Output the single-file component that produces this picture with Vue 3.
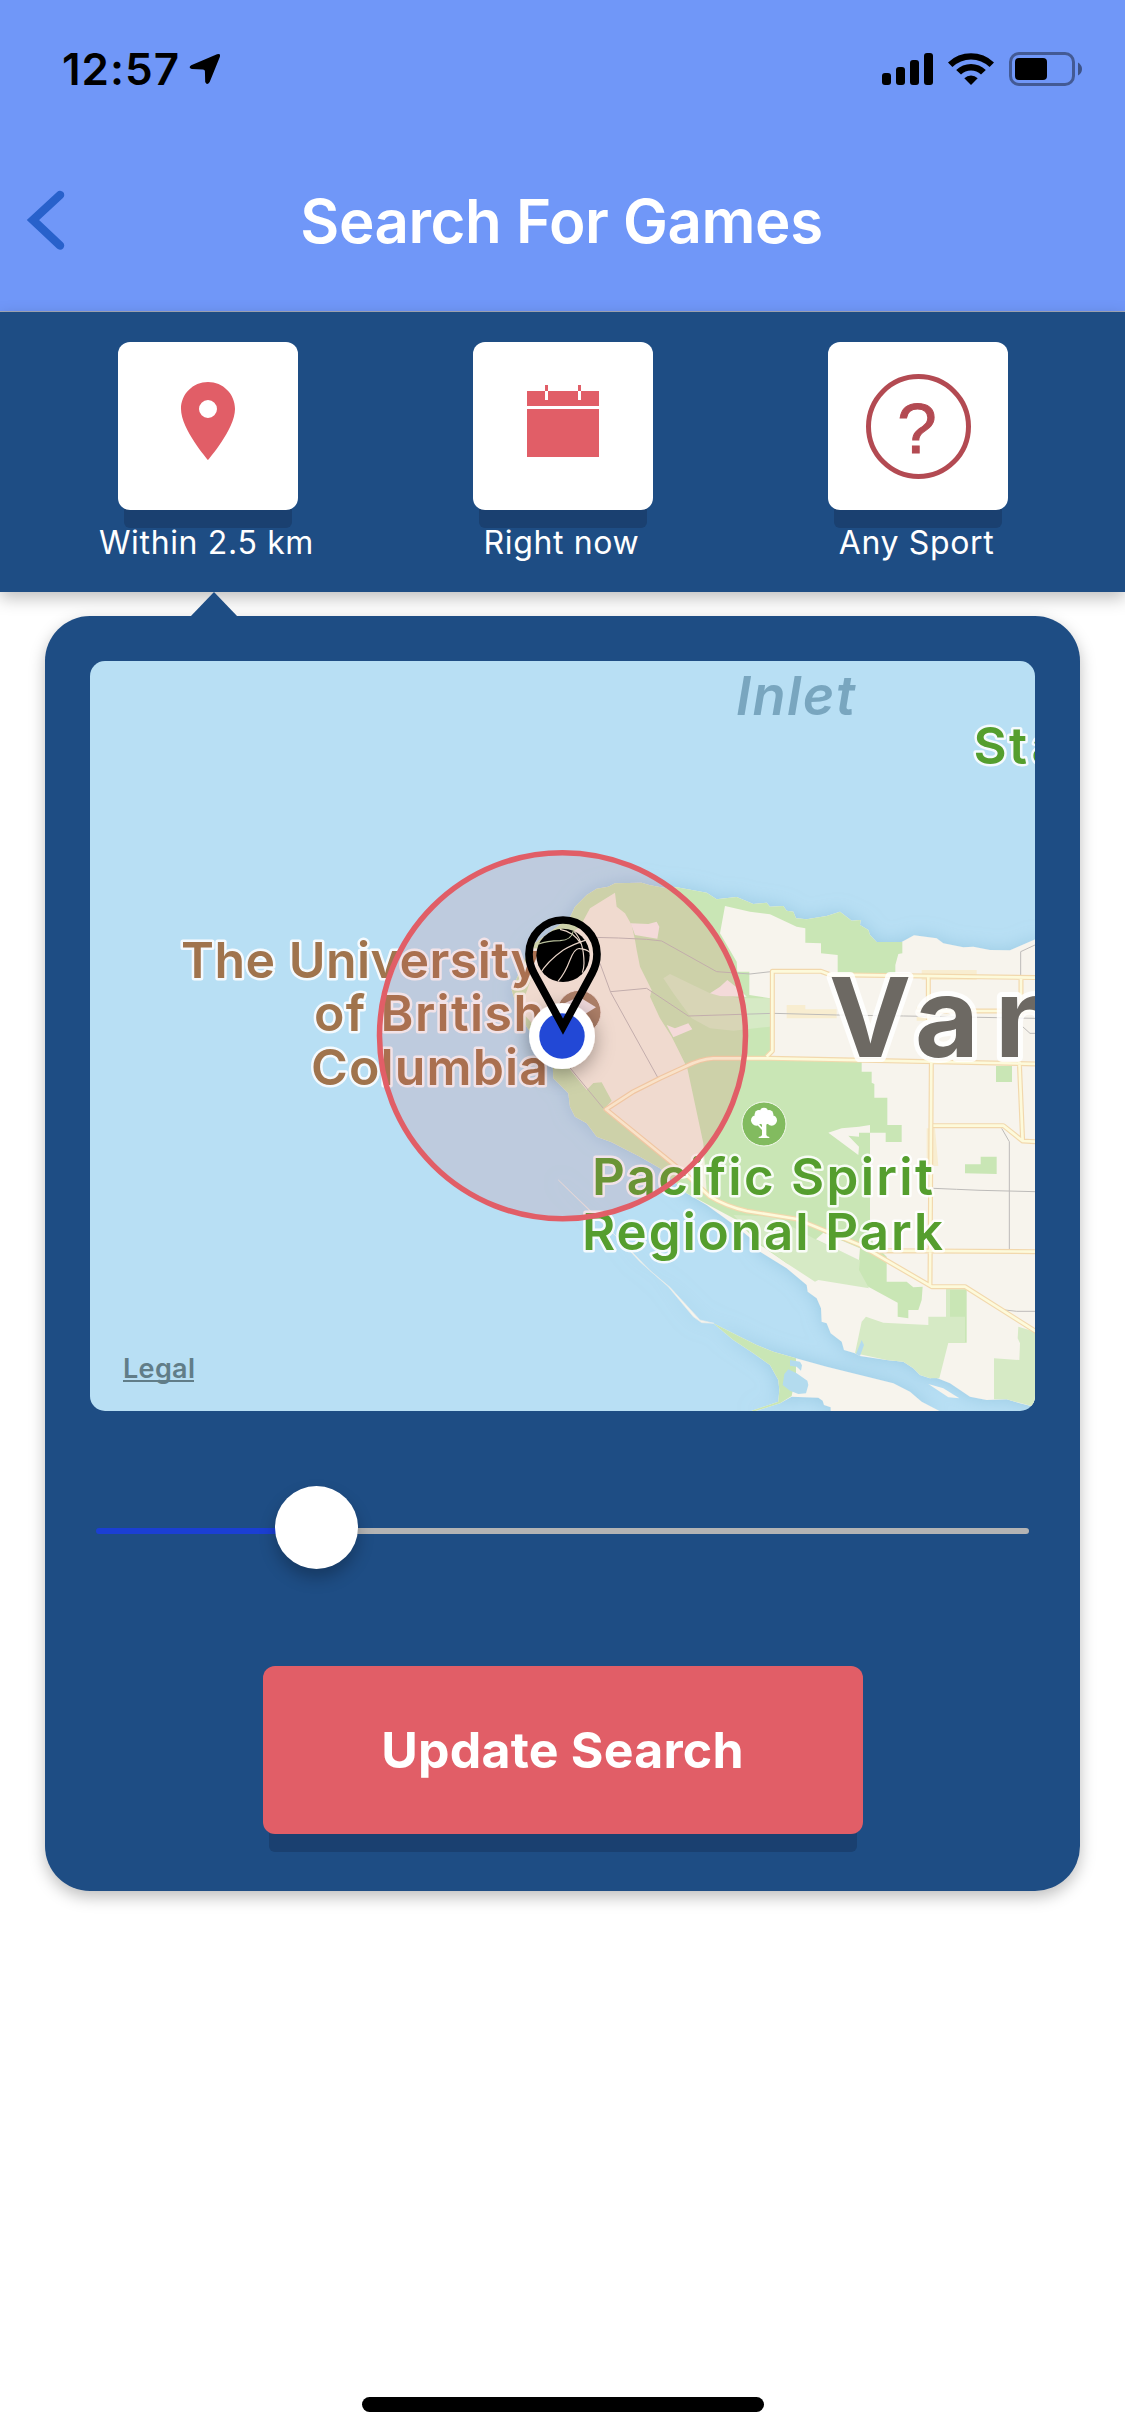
<script setup>
const filters = [
  { id: 'distance', label: 'Within 2.5 km' },
  { id: 'time', label: 'Right now' },
  { id: 'sport', label: 'Any Sport' },
]
const sliderPercent = 23.6
</script>

<template>
  <div class="screen">
    <header class="header">
      <div class="status">
        <div class="clock">
          <span class="time">12:57</span>
          <svg class="arrow" width="32" height="32" viewBox="0 0 32 32">
            <path d="M28 1.300Q32 0 30.800 4L20.700 29Q18 33 16.200 29L15.900 18Q15.800 16.500 14 16.400L2.800 16Q-1.200 14.600 2.200 12.200Z" />
          </svg>
        </div>
        <svg class="indicators" width="204" height="40" viewBox="880 49 204 40">
          <rect x="882" y="73" width="9" height="12" rx="3" />
          <rect x="896" y="67" width="9" height="18" rx="3" />
          <rect x="910" y="60" width="9" height="25" rx="3" />
          <rect x="924" y="53" width="9" height="32" rx="3" />
          <path d="M948 62.500A33 33 0 0 1 994 62.500L989.600 67A27 27 0 0 0 952.400 67Z" />
          <path d="M956.200 70A21 21 0 0 1 985.800 70L981 74.500A14.500 14.500 0 0 0 961 74.500Z" />
          <path d="M964.300 78.200A10 10 0 0 1 977.700 78.200L971 85Z" />
          <rect x="1010.500" y="53.500" width="63" height="31" rx="8.500" fill="none" stroke="#000" stroke-width="3" opacity=".4" />
          <rect x="1015" y="58" width="32" height="22" rx="4" />
          <path d="M1078 62.500Q1082 65 1082 69T1078 75.500Z" opacity=".45" />
        </svg>
      </div>
      <div class="nav">
        <svg class="back" width="40" height="64" viewBox="0 0 40 64">
          <path d="M35 6L8 31L35 56.500" fill="none" stroke="#2861cb" stroke-width="8.500" stroke-linecap="round" stroke-linejoin="miter" />
        </svg>
        <h1>Search For Games</h1>
        <span class="nav-end"></span>
      </div>
    </header>

    <nav class="filters">
      <div v-for="f in filters" :key="f.id" class="filter">
        <button class="tile">
          <svg width="180" height="168" viewBox="0 0 180 168">
            <g v-if="f.id === 'distance'">
              <path fill="#e15e67" fill-rule="evenodd" d="M90 40C75 40 63 52 63 67C63 87 90 118 90 118S117 87 117 67C117 52 105 40 90 40ZM90 58A9 9 0 1 1 90 76A9 9 0 1 1 90 58Z" />
            </g>
            <g v-else-if="f.id === 'time'" fill="#e15e67">
              <path d="M54 49H72V58H75V49H105V58H108V49H126V64H54ZM54 67H126V115H54ZM72 43H75V49H72ZM105 43H108V49H105Z" />
            </g>
            <g v-else>
              <circle cx="90.500" cy="84.500" r="50" fill="none" stroke="#b34a52" stroke-width="5" />
              <text x="89" y="110.500" class="question">?</text>
            </g>
          </svg>
        </button>
        <span class="label">{{ f.label }}</span>
      </div>
    </nav>

    <main class="panel">
      <svg class="pointer" width="48" height="25" viewBox="0 0 48 25"><path d="M0 25L24 0L48 25Z" /></svg>
      <svg class="map" width="945" height="750" viewBox="90 661 945 750">
        <defs>
          <filter id="shore" x="-20%" y="-20%" width="140%" height="140%">
            <feDropShadow dx="0" dy="0" stdDeviation="9" flood-color="#86bdd8" flood-opacity=".6" />
          </filter>
          <filter id="dot" x="-60%" y="-60%" width="220%" height="220%">
            <feDropShadow dx="0" dy="5" stdDeviation="10" flood-color="#000" flood-opacity=".35" />
          </filter>
        </defs>
        <rect x="90" y="661" width="945" height="750" fill="#b8dff4" />

        <g filter="url(#shore)">
          <g transform="translate(540 650) scale(.33333)" fill="#f7f4ed">
            <path d="M-85 1020L-50 940L-30 890L90 802L105 770L140 735L170 716L205 710L225 700L305 698L330 706L380 715L410 712L500 728L530 748L590 741L640 762L680 758L690 770L730 768L740 782L760 785L768 805L800 808L860 798L900 785L935 812L962 810L960 825L985 840L990 855L1010 876L1085 876L1122 856L1190 865L1210 880L1270 892L1300 890L1350 900L1410 901L1500 862V2275L1440 2260L1400 2248L1340 2250L1290 2240L1230 2200L1185 2182L1170 2185L1140 2175L1120 2155L1090 2135L1040 2130L960 2118L945 2110L912 2100L905 2075L872 2050L860 2020L845 2015L843 1975L830 1945L803 1925L800 1905L740 1855L660 1805L650 1780L590 1730L500 1665L440 1630L360 1555L300 1520L260 1500L215 1477L170 1460L140 1420L105 1400L90 1370L85 1330L40 1285L38 1240L-40 1130L-70 1070Z" />
            <path d="M520 2020L600 2060L650 2085L700 2105L768 2125L860 2150L960 2175L1060 2200L1110 2225L1145 2255L1200 2284H872V2272L852 2265L848 2252L835 2243L755 2240L720 2260L640 2285L635 2282L715 2255L718 2220L715 2190L690 2145L640 2110L580 2070Z" />
            <path d="M55 1590L170 1700L285 1815L330 1862L390 1912L480 2010L522 2020L485 2018L460 2000L385 1910L300 1835L230 1760L165 1698Z" stroke="#e6ebea" stroke-width="2" />
          </g>
        </g>

        <g transform="translate(540 650) scale(.33333)">
          <g fill="#c9e6b5">
            <path d="M-85 1020L-50 940L-30 890L90 802L105 770L140 735L170 716L205 710L225 700L305 698L330 706L380 715L410 712L500 728L530 748L590 741L640 762L680 758L690 770L730 768L740 782L760 785L768 805L800 808L860 798L900 785L935 812L962 810L960 825L985 840L990 855L1010 876L1087 876V910L1075 912L1066 945V970H893V915L843 910V880L796 878V835L770 830L690 793L630 785L555 768L540 850L590 935L592 965H628V1035L690 1045V1225L965 1235V1265H995V1298L1003 1302V1343H1042V1425H1085V1476H1037V1448H990V1740L1000 1780L1040 1820V1895H1100L1120 1912L1148 1910L1145 1950L1135 1980H1105V2005L1073 2000V1958L985 1910L830 1880L740 1840L660 1785L590 1710L440 1630L360 1555L300 1520L260 1500L215 1477L170 1460L140 1420L105 1400L90 1370L85 1330L40 1285L38 1240L-40 1130L-70 1070Z" />
            <path d="M1368 1248H1416V1296H1368ZM1275 1543H1322V1520H1370V1572L1275 1570ZM1218 1918H1280V2078H1218Z" />
            <path d="M520 2020L600 2060L650 2085L700 2105L768 2125V2170L755 2238L720 2260L640 2285L635 2282L715 2255L718 2220L715 2190L690 2145L640 2110L580 2070Z" />
          </g>
          <path fill="#f3f0e2" d="M225 728L230 770L255 790L275 825L285 870L290 900L300 950L335 1020L330 1040L360 1105L395 1160L415 1200L442 1255L490 1480L500 1625L460 1590L190 1380L215 1352L185 1297L160 1299L140 1320L95 1265L30 1180L-60 1080L-10 940L50 880L120 830L150 775Z" />
          <g fill="#d6eac5">
            <path d="M370 985L390 972L510 1030L600 1045L690 1045V1130L580 1142L510 1135L455 1105L400 1030Z" />
            <path d="M580 1695L700 1700L830 1770L960 1830L957 1860L987 1915L835 1890L825 1895L740 1840L660 1780Z" />
            <path d="M978 2000L1030 2018L1165 2025V2000H1218V1918H1230V2000H1275V2078H1225L1198 2185L1170 2185L1140 2175L1120 2155L1090 2135L1040 2130L945 2110L965 2015Z" />
            <path d="M1435 2030L1500 2050V2275L1400 2248H1362V2125L1438 2130L1440 2080L1433 2065Z" />
          </g>
          <g fill="#f7f0ee">
            <path d="M272 820L325 822L350 815L358 830L352 866L285 855ZM510 1030L540 1010L562 990L600 1020L620 1040L540 1038ZM380 1125L405 1135L445 1120L457 1138L400 1162Z" />
            <path fill="#f7f4ed" d="M865 1448L905 1435L957 1430L990 1425V1448H957V1460L925 1457L957 1490L955 1515ZM828 1768L850 1748L960 1795L957 1830Z" />
          </g>
          <path fill="#f8edd0" d="M740 1065H796V1078H890V1105H740ZM1145 960H1310V990H1145ZM1130 1070H1200V1112H1130ZM1160 1435H1185L1195 1548H1160Z" />
          <g fill="#b3dbee">
            <path d="M745 2158L770 2170L802 2192L805 2205L798 2230L775 2232L750 2222L728 2205L733 2172ZM750 2130L780 2135L786 2146L783 2162L770 2150L750 2147Z" />
            <path d="M965 2070L972 2085L960 2118L948 2112Z" />
          </g>
          <path fill="#f7f4ed" d="M1165 2202L1210 2215L1258 2245L1225 2242Z" />

          <g fill="none" stroke="#bdbbb9" stroke-width="3">
            <path d="M160 862L235 864L320 868L365 873L530 965L630 972L692 965M180 940L212 1027L353 1282M212 1025L320 1015L445 1098L700 1090L890 1095L1090 1098L1485 1105M50 1205L190 1375M1180 1615L1250 1618L1320 1621L1485 1625M1385 1435L1408 1475V1800M1395 1980L1430 1984H1490M1485 885L1442 905V975M1448 1130L1470 1150H1490" />
          </g>
          <g fill="none" stroke-linejoin="round">
            <g v-for="layer in 2" :key="layer" :stroke="layer === 1 ? '#f2d8ad' : '#fdfadb'" :stroke-width="layer === 1 ? 15 : 8">
              <path d="M680 1220L697 1203V964H843L870 974L1500 983M1165 975V1110M1443 980V1100M1130 1083H1500" />
              <path d="M1500 1242L690 1225H520Q480 1228 440 1248L360 1285L280 1325L198 1378L440 1575L510 1640Q560 1670 620 1683L770 1707L960 1785L1175 1910H1275L1500 2052M1174 1235L1170 1905M1438 1235L1448 1475M1180 1427H1390L1448 1473L1500 1476M1015 1802L1500 1805" />
            </g>
          </g>

          <circle cx="117" cy="1087" r="66" fill="#a38468" stroke="#f3ece2" stroke-width="3" />
          <path fill="#f1eef0" d="M50 1070L117 1040L168 1072L117 1103Z" />
          <circle cx="672" cy="1422" r="66" fill="#82bb5f" stroke="#f3f8ec" stroke-width="3" />
          <g fill="#fff">
            <circle cx="672" cy="1385" r="12" /><circle cx="657" cy="1393" r="13" /><circle cx="687" cy="1393" r="13" />
            <circle cx="649" cy="1411" r="16" /><circle cx="695" cy="1411" r="16" /><circle cx="672" cy="1407" r="18" />
            <path d="M666 1415H679V1455Q680 1460 688 1461V1464H656V1461Q665 1460 666 1455V1440L652 1425L656 1422L666 1432Z" />
          </g>
        </g>

        <g class="place">
          <text x="736" y="715" class="water" textLength="119">Inlet</text>
          <text x="973.500 1009 1031.500" y="763.500" class="park">Sta</text>
          <text x="181" y="978" class="campus" textLength="359">The University</text>
          <text x="314" y="1031" class="campus" textLength="230">of British</text>
          <text x="311" y="1084.500" class="campus" textLength="237">Columbia</text>
          <text x="592" y="1195" class="park" textLength="341">Pacific Spirit</text>
          <text x="582" y="1250" class="park" textLength="361">Regional Park</text>
          <text x="829 915 995" y="1056.500" class="city">Van</text>
        </g>
        <text x="123" y="1378" class="legal" textLength="72">Legal</text>
        <rect x="123" y="1380" width="71" height="2" fill="#617d88" />

        <circle cx="562.500" cy="1035.700" r="183" fill="#e15e67" fill-opacity=".15" stroke="#e15e67" stroke-width="5.500" />

        <circle cx="562" cy="1036" r="33" fill="#fff" filter="url(#dot)" />
        <circle cx="562" cy="1036" r="22.700" fill="#2248d6" />
        <g transform="translate(360 830) scale(.33333)" fill="none">
          <path d="M609 590L522 430C510 408 507 393 507 372A102 102 0 0 1 711 372C711 393 708 408 696 430Z" stroke="#000" stroke-width="23" />
          <circle cx="609" cy="376" r="80" fill="#000" />
          <g stroke="#e9d5c8" stroke-width="3.500">
            <path d="M538 435Q560 395 610 360Q640 342 684 328M594 454Q615 430 630 390Q645 352 660 356Q680 358 690 367M600 298Q640 305 662 340M642 304Q672 335 672 400Q672 415 667 428" />
            <path d="M536 342Q560 333 600 332Q635 330 640 303" stroke="#b9c19c" />
          </g>
        </g>
      </svg>

      <div class="slider">
        <div class="fill" :style="{ width: sliderPercent + '%' }"></div>
        <div class="thumb"></div>
        <div class="rest"></div>
      </div>

      <button class="update">Update Search</button>
    </main>

    <footer class="home"><span></span></footer>
  </div>
</template>

<style>
body { margin: 0; background: #fff; }
</style>

<style scoped>
.screen { width: 1125px; height: 2436px; overflow: hidden; display: flex; flex-direction: column; font-family: Inter, "Liberation Sans", sans-serif; background: #fff; }
svg { display: block; }
button { border: 0; padding: 0; font-family: inherit; }
.header { height: 311px; background: #7097f8; border-bottom: 1px solid #a3a9b8; flex: none; }
.status { height: 132px; box-sizing: border-box; padding: 49px 41px 0 62px; display: flex; justify-content: space-between; }
.clock { display: flex; align-items: flex-start; }
.time { width: 127px; font-size: 44px; line-height: 40px; font-weight: 600; letter-spacing: 1px; }
.arrow { margin-top: 4px; }
.nav { height: 177px; display: flex; align-items: center; justify-content: space-between; padding: 0 25px; }
.nav-end { width: 42px; }
h1 { margin: 0; color: #fff; font-size: 60px; line-height: 72px; font-weight: 600; letter-spacing: -.45px; white-space: nowrap; }
.filters { position: relative; height: 280px; box-sizing: border-box; padding: 30px 30px 0; flex: none; display: flex; justify-content: space-between; background: #1e4d84; box-shadow: 0 6px 16px rgba(0, 0, 0, .26); }
.filter { width: 355px; display: flex; flex-direction: column; align-items: center; }
.tile { width: 180px; height: 168px; border-radius: 12px; background: #fff; box-shadow: 0 24px 0 -6px #1a4070; }
.question { font-family: "Liberation Sans", sans-serif; font-size: 71px; fill: #b34a52; stroke: #b34a52; stroke-width: 1px; text-anchor: middle; }
.label { position: relative; margin-top: 13px; margin-right: 2px; color: #fff; font-size: 32px; line-height: 40px; letter-spacing: .65px; white-space: nowrap; }
.panel { position: relative; margin: 24px 45px 0; height: 1275px; box-sizing: border-box; padding: 45px 45px 0; display: flex; flex-direction: column; align-items: center; flex: none; border-radius: 45px; background: #1e4d84; box-shadow: 0 6px 16px rgba(0, 0, 0, .26); }
.pointer { position: absolute; left: 145px; top: -24px; fill: #1e4d84; }
.map { border-radius: 15px; overflow: hidden; flex: none; }
.place text { font-weight: 600; paint-order: stroke; stroke: rgba(255, 255, 255, .85); stroke-width: 5px; stroke-linejoin: round; }
.place .campus { font-size: 50px; fill: #a0744d; }
.place .park { font-size: 51px; fill: #559e2e; }
.place .water { font-size: 54px; font-style: italic; fill: #79a6bf; stroke: none; }
.place .city { font-size: 110px; font-weight: 700; fill: #6d6963; stroke-width: 10px; }
.legal { font-size: 27px; font-weight: 600; fill: #617d88; }
.slider { width: 933px; height: 83px; margin-top: 75px; display: flex; align-items: center; flex: none; }
.fill, .rest { height: 6px; margin-top: 7px; border-radius: 3px; background: #1b3fd3; flex: none; }
.fill { margin-right: -41px; }
.rest { flex: 1; margin-left: -41px; background: #b4b4b4; }
.thumb { position: relative; width: 83px; height: 83px; border-radius: 50%; background: #fff; box-shadow: 0 9px 16px rgba(0, 0, 0, .25); flex: none; }
.update { width: 600px; height: 168px; margin-top: 97px; border-radius: 12px; background: #e15e67; color: #fff; font-size: 50px; font-weight: 700; letter-spacing: .2px; box-shadow: 0 24px 0 -6px #1a4070; }
.home { margin-top: auto; height: 39px; display: flex; justify-content: center; }
.home span { width: 402px; height: 15px; border-radius: 8px; background: #000; }
</style>
